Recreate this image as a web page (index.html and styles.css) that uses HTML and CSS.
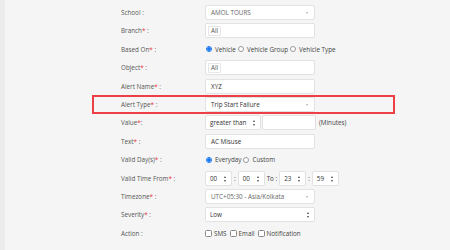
FILE: index.html
```html
<!DOCTYPE html>
<html lang="en">
<head>
  <meta charset="UTF-8" />
  <title>Add Alert</title>
  <link rel="stylesheet" href="styles.css">
</head>
<body>
  <div class="page">
    <form class="alert-form">
      <div class="row">
        <label>School :</label>
        <div class="ctl select muted">AMOL TOURS<span class="caret"></span></div>
      </div>
      <div class="row">
        <label>Branch<i>*</i> :</label>
        <div class="ctl"><span class="chip">All</span></div>
      </div>
      <div class="row">
        <label>Based On<i>*</i> :</label>
        <div class="opts">
          <span class="radio on"></span>Vehicle
          <span class="radio"></span>Vehicle Group
          <span class="radio"></span>Vehicle Type
        </div>
      </div>
      <div class="row">
        <label>Object<i>*</i> :</label>
        <div class="ctl"><span class="chip">All</span></div>
      </div>
      <div class="row">
        <label>Alert Name<i>*</i> :</label>
        <div class="ctl">XYZ</div>
      </div>
      <div class="row highlight">
        <label>Alert Type<i>*</i> :</label>
        <div class="ctl select">Trip Start Failure<span class="caret"></span></div>
      </div>
      <div class="row">
        <label>Value<i>*</i>:</label>
        <div class="opts">
          <div class="ctl spin w-value">greater than<span class="updown"></span></div>
          <div class="ctl w-num"></div>
          <span class="unit">(Minutes)</span>
        </div>
      </div>
      <div class="row">
        <label>Text<i>*</i> :</label>
        <div class="ctl">AC Misuse</div>
      </div>
      <div class="row">
        <label>Valid Day(s)<i>*</i> :</label>
        <div class="opts">
          <span class="radio on"></span>Everyday
          <span class="radio"></span>Custom
        </div>
      </div>
      <div class="row">
        <label>Valid Time From<i>*</i> :</label>
        <div class="opts time">
          <div class="ctl spin w-time">00<span class="updown"></span></div>
          <span class="sep">:</span>
          <div class="ctl spin w-time">00<span class="updown"></span></div>
          <span class="sep">To :</span>
          <div class="ctl spin w-time">23<span class="updown"></span></div>
          <span class="sep">:</span>
          <div class="ctl spin w-time">59<span class="updown"></span></div>
        </div>
      </div>
      <div class="row">
        <label>Timezone<i>*</i> :</label>
        <div class="ctl select muted">UTC+05:30 - Asia/Kolkata<span class="caret"></span></div>
      </div>
      <div class="row">
        <label>Severity<i>*</i> :</label>
        <div class="ctl spin">Low<span class="updown"></span></div>
      </div>
      <div class="row">
        <label>Action :</label>
        <div class="opts">
          <span class="check"></span>SMS
          <span class="check"></span>Email
          <span class="check"></span>Notification
        </div>
      </div>
    </form>
  </div>
</body>
</html>
```

FILE: styles.css
```css
body {
  margin: 0;
  padding: 0;
  background: #f5f5f5;
  font-family: 'Open Sans', sans-serif;
  font-size: 6.3px;
  color: #333;
}

.page {
  min-height: 250px;
  border-left: 5px solid #ececec;
  padding: 5px 0 0 116px;
  box-sizing: border-box;
}

.row {
  display: grid;
  grid-template-columns: 84px 110px;
  align-items: center;
  height: 15px;
  margin-bottom: 3.4px;
}

.row label {
  color: #555;
  white-space: nowrap;
}

.row label i {
  font-style: normal;
  color: #e8363b;
}

.highlight {
  position: relative;
}

.highlight::after {
  content: "";
  position: absolute;
  left: -29px;
  top: -2px;
  width: 303px;
  height: 19px;
  border: 2px solid #ec4046;
  box-sizing: border-box;
}

.ctl {
  height: 15px;
  box-sizing: border-box;
  border: 1px solid #e2e2e2;
  border-radius: 2px;
  background: #fff;
  padding: 0 5px;
  display: flex;
  align-items: center;
  color: #333;
  white-space: nowrap;
  position: relative;
  flex: none;
}

.ctl.muted {
  color: #666;
}

.ctl.spin {
  padding-left: 4px;
}

.chip {
  border: 1px solid #e6e6e6;
  border-radius: 1px;
  padding: 0 2px;
  margin-left: -3px;
  line-height: 8px;
  color: #555;
}

.caret {
  position: absolute;
  right: 6px;
  top: 6px;
  border-left: 1.5px solid transparent;
  border-right: 1.5px solid transparent;
  border-top: 2px solid #aaa;
}

.updown {
  position: absolute;
  right: 4px;
  top: 4px;
  width: 3px;
  height: 6px;
}

.updown::before,
.updown::after {
  content: "";
  position: absolute;
  left: 0;
  border-left: 1.5px solid transparent;
  border-right: 1.5px solid transparent;
}

.updown::before {
  top: 0;
  border-bottom: 2.2px solid #444;
}

.updown::after {
  bottom: 0;
  border-top: 2.2px solid #444;
}

.opts {
  display: flex;
  align-items: center;
  white-space: nowrap;
  color: #444;
}

.radio {
  flex: none;
  width: 6px;
  height: 6px;
  box-sizing: border-box;
  border: 1px solid #999;
  border-radius: 50%;
  background: #fff;
  margin: 0 3px 0 1px;
}

.radio ~ .radio {
  margin-left: 2px;
}

.radio.on {
  border-color: #1877f2;
  background: radial-gradient(circle, #1877f2 55%, #fff 60%);
}

.check {
  flex: none;
  width: 7px;
  height: 7px;
  box-sizing: border-box;
  border: 1px solid #888;
  border-radius: 1.5px;
  background: #fff;
  margin: 0 2px 0 0;
}

.check ~ .check {
  margin-left: 3px;
}

.w-value {
  width: 56px;
}

.w-num {
  width: 54px;
  margin-left: 1px;
}

.unit {
  margin-left: 3px;
  color: #444;
}

.w-time {
  width: 27px;
}

.time .sep {
  margin: 0 2px;
  color: #444;
}
```
